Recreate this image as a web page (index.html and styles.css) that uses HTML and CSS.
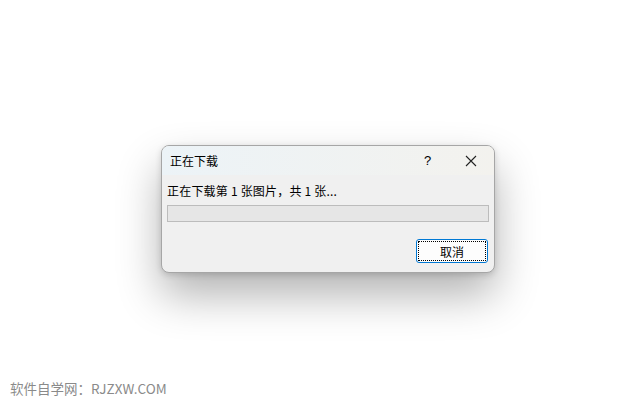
FILE: index.html
```html
<!DOCTYPE html>
<html lang="zh-CN">
<head>
    <meta charset="UTF-8">
    <title>正在下载</title>
    <link rel="stylesheet" href="styles.css">
</head>
<body>
    <div class="stage">
        <div class="dialog">
            <div class="titlebar">
                <span class="title">正在下载</span>
                <span class="help">?</span>
                <span class="close">
                    <svg width="12" height="12" viewBox="0 0 12 12">
                        <path d="M1 1 L11 11 M11 1 L1 11" stroke="#222" stroke-width="1.1" fill="none"/>
                    </svg>
                </span>
            </div>
            <div class="content">
                <div class="message">正在下载第 1 张图片，共 1 张...</div>
                <div class="progress"></div>
                <div class="actions">
                    <button class="btn"><span class="focus">取消</span></button>
                </div>
            </div>
        </div>
    </div>
    <div class="footer">软件自学网：RJZXW.COM</div>
</body>
</html>
```

FILE: styles.css
```css
body {
    margin: 0;
    background: #fff;
    font-family: "Noto Sans CJK SC", "Noto Sans", sans-serif;
    width: 623px;
    height: 407px;
    overflow: hidden;
}
.stage {
    padding: 145px 0 0 161px;
    height: 228px;
}
.dialog {
    width: 332px;
    height: 126px;
    border: 1px solid #a6a6a6;
    border-radius: 8px;
    background: #f0f0f0;
    box-shadow: 0 22px 44px rgba(0, 0, 0, 0.3), 0 2px 6px rgba(0, 0, 0, 0.15);
    overflow: hidden;
    display: flex;
    flex-direction: column;
}
.titlebar {
    height: 29px;
    display: flex;
    align-items: center;
    background: linear-gradient(to right, #ecf3f7, #f3f2ee);
    font-size: 12px;
    color: #000;
}
.title {
    padding-left: 8px;
    flex: 1;
}
.help {
    width: 12px;
    font-family: "Liberation Sans", sans-serif;
    font-size: 13px;
    margin-right: 29px;
}
.close {
    display: flex;
    margin-right: 17px;
}
.content {
    flex: 1;
    padding: 8px 5px 0 5px;
}
.message {
    font-size: 12px;
    line-height: 16px;
    letter-spacing: 0.2px;
    color: #000;
}
.progress {
    margin-top: 6px;
    height: 15px;
    border: 1px solid #bcbcbc;
    background: #e6e6e6;
}
.actions {
    display: flex;
    justify-content: flex-end;
    margin-top: 17px;
    padding-right: 1px;
}
.btn {
    width: 72px;
    height: 24px;
    padding: 1px;
    border: 1px solid #0078d4;
    border-radius: 3px;
    background: #fdfdfd;
    font-family: inherit;
    font-size: 12px;
    color: #000;
    display: flex;
}
.focus {
    flex: 1;
    border: 1px dotted #000;
    display: flex;
    align-items: center;
    justify-content: center;
}
.footer {
    padding-left: 10px;
    margin-top: 5px;
    font-size: 13.5px;
    color: #8a8a8a;
}
```
